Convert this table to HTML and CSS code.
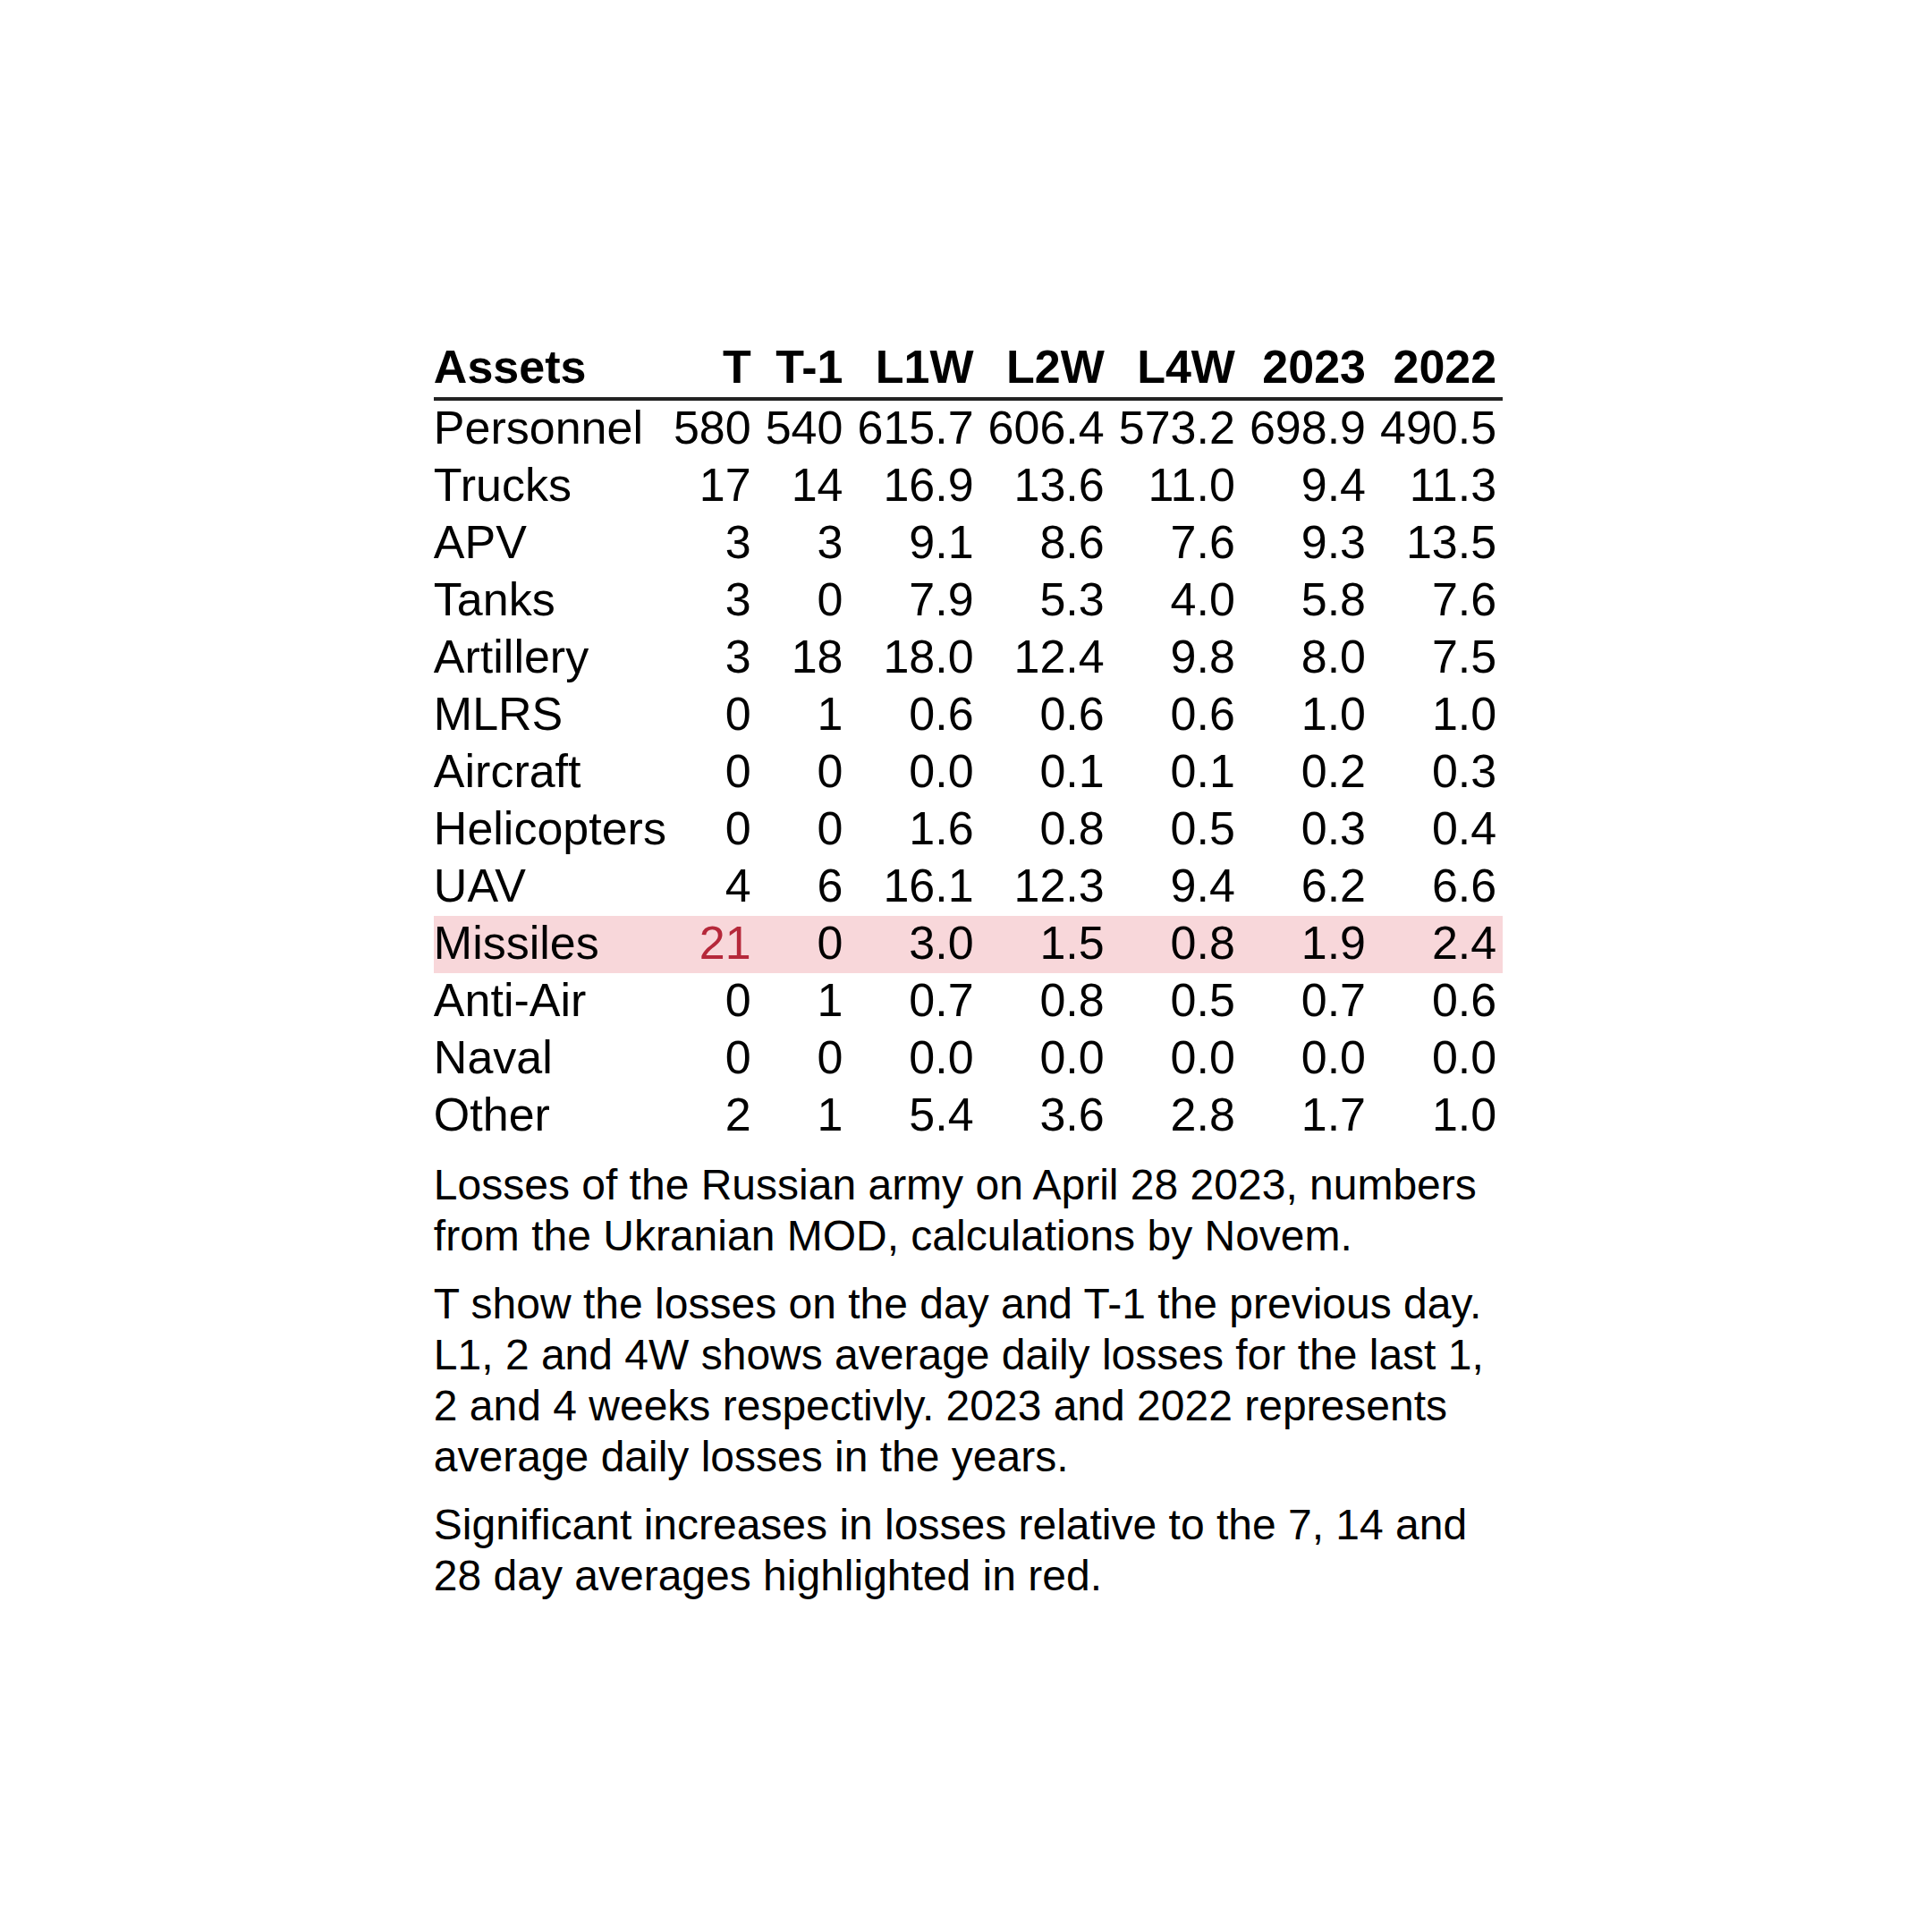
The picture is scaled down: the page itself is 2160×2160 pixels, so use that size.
FILE: index.html
```html
<!DOCTYPE html>
<html lang="en">
<head>
<meta charset="utf-8">
<title>Losses of the Russian army</title>
<link rel="stylesheet" href="styles.css">
</head>
<body>
<main class="page">
  <table class="losses">
    <thead>
      <tr>
        <th class="label">Assets</th>
        <th class="today">T</th><th>T-1</th><th>L1W</th><th>L2W</th><th>L4W</th><th>2023</th><th>2022</th>
      </tr>
    </thead>
    <tbody>
      <tr><td class="label">Personnel</td><td class="today">580</td><td>540</td><td>615.7</td><td>606.4</td><td>573.2</td><td>698.9</td><td>490.5</td></tr>
      <tr><td class="label">Trucks</td><td class="today">17</td><td>14</td><td>16.9</td><td>13.6</td><td>11.0</td><td>9.4</td><td>11.3</td></tr>
      <tr><td class="label">APV</td><td class="today">3</td><td>3</td><td>9.1</td><td>8.6</td><td>7.6</td><td>9.3</td><td>13.5</td></tr>
      <tr><td class="label">Tanks</td><td class="today">3</td><td>0</td><td>7.9</td><td>5.3</td><td>4.0</td><td>5.8</td><td>7.6</td></tr>
      <tr><td class="label">Artillery</td><td class="today">3</td><td>18</td><td>18.0</td><td>12.4</td><td>9.8</td><td>8.0</td><td>7.5</td></tr>
      <tr><td class="label">MLRS</td><td class="today">0</td><td>1</td><td>0.6</td><td>0.6</td><td>0.6</td><td>1.0</td><td>1.0</td></tr>
      <tr><td class="label">Aircraft</td><td class="today">0</td><td>0</td><td>0.0</td><td>0.1</td><td>0.1</td><td>0.2</td><td>0.3</td></tr>
      <tr><td class="label">Helicopters</td><td class="today">0</td><td>0</td><td>1.6</td><td>0.8</td><td>0.5</td><td>0.3</td><td>0.4</td></tr>
      <tr><td class="label">UAV</td><td class="today">4</td><td>6</td><td>16.1</td><td>12.3</td><td>9.4</td><td>6.2</td><td>6.6</td></tr>
      <tr class="highlight"><td class="label">Missiles</td><td class="today alert">21</td><td>0</td><td>3.0</td><td>1.5</td><td>0.8</td><td>1.9</td><td>2.4</td></tr>
      <tr><td class="label">Anti-Air</td><td class="today">0</td><td>1</td><td>0.7</td><td>0.8</td><td>0.5</td><td>0.7</td><td>0.6</td></tr>
      <tr><td class="label">Naval</td><td class="today">0</td><td>0</td><td>0.0</td><td>0.0</td><td>0.0</td><td>0.0</td><td>0.0</td></tr>
      <tr><td class="label">Other</td><td class="today">2</td><td>1</td><td>5.4</td><td>3.6</td><td>2.8</td><td>1.7</td><td>1.0</td></tr>
    </tbody>
    <caption class="notes">
      <p>Losses of the Russian army on April 28 2023, numbers from the Ukranian MOD, calculations by Novem.</p>
      <p>T show the losses on the day and T-1 the previous day. L1, 2 and 4W shows average daily losses for the last 1, 2 and 4 weeks respectivly. 2023 and 2022 represents average daily losses in the years.</p>
      <p>Significant increases in losses relative to the 7, 14 and 28 day averages highlighted in red.</p>
    </caption>
  </table>
</main>
</body>
</html>
```

FILE: styles.css
```css
html, body {
  margin: 0;
  padding: 0;
  background: #ffffff;
}

body {
  font-family: "Liberation Sans", Arial, sans-serif;
  color: #000000;
}

.page {
  display: flex;
  justify-content: center;
  padding-top: 380px;
  padding-left: 5px;
}

.losses {
  border-collapse: collapse;
  border-spacing: 0;
  font-size: 52px;
  white-space: nowrap;
}

.losses th,
.losses td {
  height: 64px;
  line-height: 60px;
  padding: 0 0 0 16px;
  text-align: right;
  vertical-align: top;
}

.losses th {
  font-weight: 700;
}

.losses thead tr {
  border-bottom: 4px solid #222222;
}

.losses th.label,
.losses td.label {
  padding-left: 0;
  text-align: left;
}

.losses th.today,
.losses td.today {
  padding-left: 8px;
}

.losses th:last-child,
.losses td:last-child {
  padding-right: 7px;
}

.losses .highlight {
  background: #f8d7da;
}

.losses .alert {
  color: #b5283a;
}

.notes {
  caption-side: bottom;
  text-align: left;
  white-space: normal;
  font-size: 48px;
  line-height: 57px;
  padding-top: 16px;
}

.notes p {
  margin: 0 0 19px 0;
}

.notes p:last-child {
  margin-bottom: 0;
}
```
